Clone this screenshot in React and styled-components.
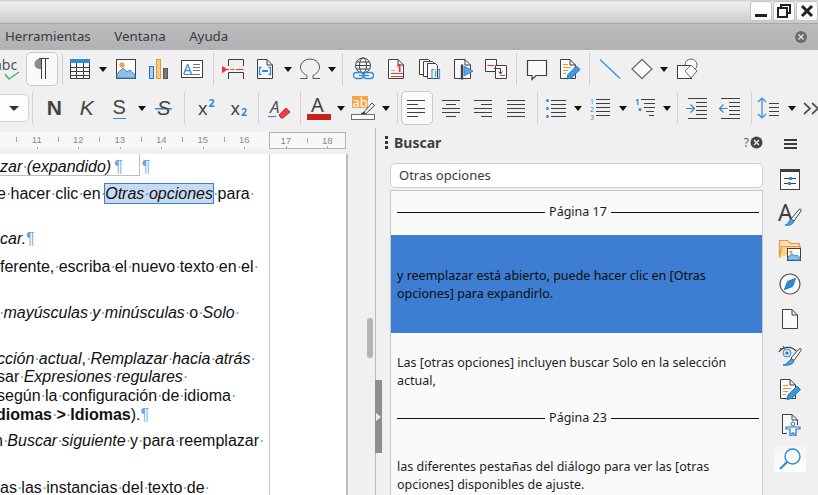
import React from "react";
import styled, { createGlobalStyle } from "styled-components";

const UI_FONT = '"Noto Sans", "Open Sans", sans-serif';
const DOC_FONT = '"Liberation Sans", Arial, sans-serif';
const INK = "#3f3f3f";
const BLUE = "#2f8ad8";

const GlobalStyle = createGlobalStyle`
    html, body {
        margin: 0;
        padding: 0;
        background: #f0f0f0;
    }
    * {
        box-sizing: border-box;
    }
`;

/* ---------- icons ---------- */

const Svg = ({ children, size = 24 }) => (
    <svg width={size} height={size} viewBox="0 0 24 24" fill="none" stroke={INK} strokeWidth="1">
        {children}
    </svg>
);

const Sheet = ({ x = 0 }) => (
    <path d={`M${x + 4.5} 2.5H${x + 14}L${x + 19.5} 8V21.5H${x + 4.5}ZM${x + 14} 2.5V8H${x + 19.5}`} fill="#fafafa" />
);

const Pencil = ({ d }) => <path d={d} fill="#3f97e0" stroke="#1f78c4" />;

const icons = {
    spell: (
        <Svg>
            <text x="-3" y="13" fontSize="14" fontFamily={UI_FONT} fill="#555" stroke="none">abc</text>
            <path d="M8 17l4 5 10-7" stroke="#3cb371" strokeWidth="1.4" />
        </Svg>
    ),
    pilcrow: (
        <Svg>
            <path d="M12 2H9a4.5 5 0 0 0 0 10h3z" fill="#8c8c8c" stroke="none" />
            <path d="M11.5 2v20M15.5 2v20M9 1.5h10" />
        </Svg>
    ),
    table: (
        <Svg>
            <rect x="2.5" y="2.5" width="19" height="19" fill="#fafafa" />
            <rect x="2" y="2" width="20" height="4" fill="#3b87c9" stroke="none" />
            <path d="M2.5 10.5h19M2.5 14.5h19M2.5 18.5h19M8.5 6v15M15.5 6v15" />
        </Svg>
    ),
    image: (
        <Svg>
            <rect x="2.5" y="2.5" width="19" height="19" fill="#fff" />
            <circle cx="8" cy="8" r="2.2" fill="#f7a94c" stroke="#f0933a" />
            <path d="M3 21v-4l6-6 4 4 3-2 5 5v3z" fill="#8cc0ea" stroke="#3b87c9" />
        </Svg>
    ),
    chart: (
        <Svg>
            <rect x="3.5" y="9.5" width="4" height="12" fill="#a8d0f0" stroke="#1f78c4" />
            <rect x="10.5" y="2.5" width="4" height="19" fill="#f9c98a" stroke="#f0933a" />
            <rect x="17.5" y="11.5" width="4" height="10" fill="#777" stroke="#555" />
        </Svg>
    ),
    textbox: (
        <Svg>
            <rect x="1.5" y="3.5" width="21" height="17" fill="#fff" />
            <text x="3" y="17" fontSize="14" fontFamily={UI_FONT} fill={BLUE} stroke="none">A</text>
            <path d="M13 7.5h7M13 10.5h7M13 13.5h7M4 17.5h16" stroke="#777" />
        </Svg>
    ),
    pageBreak: (
        <Svg>
            <path d="M7.5 9V2.5h15V9M7.5 22v-6.5h15V22" />
            <path d="M5 12.5h3M9.5 12.5h4M15 12.5h7.5" stroke="#e33" />
            <path d="M1.5 9.5v6l4-3z" fill="#e33" stroke="#e33" />
        </Svg>
    ),
    field: (
        <Svg>
            <Sheet />
            <path d="M8.5 10.5h-2v7h2M15.5 10.5h2v7h-2" stroke={BLUE} strokeWidth="1.3" />
            <path d="M9 14h6" stroke={BLUE} strokeWidth="2" />
        </Svg>
    ),
    omega: (
        <Svg>
            <path d="M2 21.5h7v-3C5 16.5 2.5 13.5 2.5 10a9.5 8 0 0 1 19 0c0 3.5-2.5 6.5-6.5 8.5v3h7" stroke="#555" />
        </Svg>
    ),
    hyperlink: (
        <Svg>
            <circle cx="11" cy="8.5" r="7.5" fill="#fafafa" />
            <ellipse cx="11" cy="8.5" rx="3.5" ry="7.5" />
            <path d="M3.5 8.5h15M4.5 5h13M4.5 12h13" />
            <rect x="1.5" y="15.5" width="10" height="6" rx="3" fill="#f0f0f0" stroke={BLUE} strokeWidth="1.3" />
            <rect x="11.5" y="15.5" width="10" height="6" rx="3" fill="none" stroke={BLUE} strokeWidth="1.3" />
            <path d="M7 18.5h10" stroke={BLUE} strokeWidth="1.3" />
        </Svg>
    ),
    footnote: (
        <Svg>
            <Sheet x={-1} />
            <text x="11" y="15" fontSize="11" fontWeight="700" fontFamily={UI_FONT} fill="#e33" stroke="none">1</text>
            <path d="M6 16.5h12M6 19.5h12" stroke="#e33" />
            <path d="M6 13.5h4" stroke="#aaa" />
        </Svg>
    ),
    bookmark: (
        <Svg>
            <path d="M1.5 2.5h9l2 2v13h-11z" fill="#fafafa" />
            <path d="M5.5 4.5h9l2 2v13h-11z" fill="#fafafa" />
            <path d="M9.5 6.5h8l2 2v13h-10z" fill="#fafafa" />
            <text x="12.5" y="20" fontSize="11" fontFamily={UI_FONT} fill="#1f78c4" stroke="none">[i]</text>
        </Svg>
    ),
    nextRef: (
        <Svg>
            <path d="M3.5 21.5V2.5H14L19.5 8v13.5z" fill="#fafafa" />
            <path d="M14 2.5V8h5.5" />
            <path d="M11 7.5v15" strokeWidth="2.4" />
            <path d="M13 9l9 5-9 5z" fill="#58a8e8" stroke="#3b87c9" />
        </Svg>
    ),
    crossRef: (
        <Svg>
            <path d="M1.5 2.5h11v12h-11z" fill="#fafafa" />
            <path d="M11.5 8.5h11v13h-11z" fill="#fafafa" />
            <path d="M3.5 8.5h7M16 18.5h5" stroke="#e33" />
            <path d="M10 11.5h6.5v5M14.5 14.5l2 2.500 2-2.500" />
        </Svg>
    ),
    comment: (
        <Svg>
            <path d="M2.5 3.5h19v15H11l-4 4v-4H2.5z" fill="#fafafa" strokeWidth="1.2" />
        </Svg>
    ),
    track: (
        <Svg>
            <Sheet x={-2} />
            <path d="M5 7.5h5M5 10.5h8M5 13.5h5M5 16.5h3" stroke="#f0933a" />
            <Pencil d="M9 22l1-4.5 8.5-8.5 3.5 3.5-8.5 8.5z" />
        </Svg>
    ),
    line: (
        <Svg>
            <path d="M2 2.5l20 19" stroke="#2a8fe0" strokeWidth="1.2" />
        </Svg>
    ),
    diamond: (
        <Svg>
            <path d="M12 2.5L22 12 12 21.5 2 12z" fill="#fafafa" stroke="#6f6f6f" strokeWidth="1.3" />
        </Svg>
    ),
    shapes: (
        <Svg>
            <circle cx="16" cy="8" r="6" fill="#fafafa" stroke="#666" />
            <rect x="2.5" y="8.5" width="14" height="13" fill="#fafafa" />
            <path d="M16 8l6 6-6 7-6-7z" fill="#fafafa" stroke="#6f6f6f" />
        </Svg>
    ),
    clearFormat: (
        <Svg>
            <text x="3" y="17" fontSize="17" fontStyle="italic" fontFamily={UI_FONT} fill="#555" stroke="none">A</text>
            <path d="M1 20.5h8" stroke={BLUE} strokeWidth="1.2" />
            <path d="M12 19l7-7 4 4-7 6h-2z" fill="#ee3d48" stroke="#d8232e" />
        </Svg>
    ),
    fontColor: (
        <Svg>
            <text x="4" y="16" fontSize="20" fontFamily={UI_FONT} fill={INK} stroke="none">A</text>
            <rect x="0" y="18" width="24" height="6" fill="#c9211e" stroke="none" />
        </Svg>
    ),
    highlight: (
        <Svg>
            <rect x="1" y="0" width="16" height="12" fill="#f9a24c" stroke="none" />
            <text x="1.5" y="11" fontSize="13" fontFamily={UI_FONT} fill="#fff" stroke="none">ab</text>
            <path d="M13 16l8-9 2.5 2.5-9 8.5z" fill="#fafafa" />
            <path d="M10 18l3-2 1.5 2z" fill={INK} />
            <rect x="0.5" y="18.5" width="23" height="5" fill="#fafafa" stroke="#6f6f6f" />
        </Svg>
    ),
    alignLeft: (
        <Svg>
            <path d="M2 4.5h18M2 8.5h11M2 12.5h18M2 16.5h18M2 20.5h11" strokeWidth="1.2" />
        </Svg>
    ),
    alignCenter: (
        <Svg>
            <path d="M3 4.5h18M7 8.5h10M3 12.5h18M3 16.5h18M7 20.5h10" strokeWidth="1.2" />
        </Svg>
    ),
    alignRight: (
        <Svg>
            <path d="M3 4.5h18M10 8.5h11M3 12.5h18M3 16.5h18M10 20.5h11" strokeWidth="1.2" />
        </Svg>
    ),
    justify: (
        <Svg>
            <path d="M3 4.5h18M3 8.5h18M3 12.5h18M3 16.5h18M3 20.5h18" strokeWidth="1.2" />
        </Svg>
    ),
    bullets: (
        <Svg>
            <circle cx="3.5" cy="4.5" r="1.5" fill={BLUE} stroke="none" />
            <circle cx="3.5" cy="12.5" r="1.5" fill={BLUE} stroke="none" />
            <circle cx="3.5" cy="20.5" r="1.5" fill={BLUE} stroke="none" />
            <path d="M7 4.5h15M7 8.5h15M7 12.5h15M7 16.5h15M7 20.5h15" strokeWidth="1.1" />
        </Svg>
    ),
    numbers: (
        <Svg>
            <text x="2" y="8" fontSize="7" fontFamily={UI_FONT} fill={BLUE} stroke="none">1</text>
            <text x="2" y="16" fontSize="7" fontFamily={UI_FONT} fill={BLUE} stroke="none">2</text>
            <text x="2" y="24" fontSize="7" fontFamily={UI_FONT} fill={BLUE} stroke="none">3</text>
            <path d="M8 3.5h14M8 7.5h14M8 11.5h14M8 15.5h14M8 19.5h14" strokeWidth="1.1" />
        </Svg>
    ),
    outline: (
        <Svg>
            <text x="2" y="9" fontSize="8" fontWeight="700" fontFamily={UI_FONT} fill={BLUE} stroke="none">1</text>
            <circle cx="7" cy="13.5" r="1.5" fill={BLUE} stroke="none" />
            <path d="M8 3.5h14M11 7.5h11M11 11.5h11M13 15.5h8M16 19.5h5" strokeWidth="1.1" />
        </Svg>
    ),
    indent: (
        <Svg>
            <path d="M3 2.5h19M11 6.5h11M11 10.5h11M11 14.5h11M11 18.5h11M3 22.5h19" strokeWidth="1.1" />
            <path d="M1 12.5h8M5.5 8.5l4 4-4 4" stroke={BLUE} strokeWidth="1.2" />
        </Svg>
    ),
    outdent: (
        <Svg>
            <path d="M3 2.5h19M11 6.5h11M11 10.5h11M11 14.5h11M11 18.5h11M3 22.5h19" strokeWidth="1.1" />
            <path d="M1.5 12.5h8M5.5 8.5l-4 4 4 4" stroke={BLUE} strokeWidth="1.2" />
        </Svg>
    ),
    spacing: (
        <Svg>
            <path d="M5 2v20M1 6l4-4 4 4M1 18l4 4 4-4" stroke={BLUE} strokeWidth="1.2" />
            <path d="M12 7.5h10M12 11.5h10M12 15.5h10M12 19.5h10" strokeWidth="1.2" />
        </Svg>
    ),
    more: (
        <Svg>
            <path d="M4 7l6 5.5L4 18M12 7l6 5.5L12 18" stroke="#555" strokeWidth="1.8" />
        </Svg>
    ),
    properties: (
        <Svg>
            <rect x="2.5" y="2.5" width="19" height="20" fill="#fafafa" />
            <rect x="2" y="2" width="20" height="3" fill={INK} stroke="none" />
            <path d="M6 11.5h12M6 16.5h12" />
            <rect x="11" y="10" width="3" height="3" fill={BLUE} stroke="none" />
            <rect x="10" y="15" width="3" height="3" fill={BLUE} stroke="none" />
        </Svg>
    ),
    styles: (
        <Svg>
            <text x="0" y="19" fontSize="23" fontFamily={UI_FONT} fill={INK} stroke="none">A</text>
            <path d="M13 17L21 7.5c1.5-1 2.500 0 2 1.500l-7 10z" fill="#fafafa" />
            <path d="M7 23c3 0 3-3 6-6l3 2.5c-1 3-5 4.500-9 3.500z" fill="#4a9ee5" stroke="#1f78c4" />
        </Svg>
    ),
    gallery: (
        <Svg>
            <path d="M1.5 20.5V3.5h8l3 3h9v3" fill="#fde3b5" stroke="#f0933a" strokeWidth="1.2" />
            <path d="M1.5 20.5l2-11h19l-1 5" fill="#fbd28d" stroke="#f0933a" strokeWidth="1.2" />
            <rect x="9.5" y="11.5" width="13" height="12" fill="#fff" />
            <circle cx="13" cy="15" r="1.5" fill="#f0933a" stroke="none" />
            <path d="M10 23v-3l4-3 3 2 2-1 3 3v2z" fill="#8cc0ea" stroke="#3b87c9" />
        </Svg>
    ),
    navigator: (
        <Svg>
            <circle cx="12" cy="12" r="10" fill="#fafafa" stroke="#555" strokeWidth="1.2" />
            <path d="M17.5 6.500l-3 8-8 3 3-8z" fill="#2f8ad8" stroke="#1f78c4" />
        </Svg>
    ),
    page: (
        <Svg>
            <Sheet />
        </Svg>
    ),
    pageStyle: (
        <Svg>
            <path d="M1 10c3-5 12-7 17-1" strokeWidth="1.2" />
            <path d="M2 6l2 2M5 4l1.5 2.5" />
            <circle cx="9" cy="11" r="4" fill="#cfe4f7" stroke="#3b87c9" />
            <circle cx="9" cy="11" r="1.6" fill="#1f78c4" stroke="none" />
            <path d="M13 16L21 7c1.5-1 2.500 0 2 1.500l-7 10z" fill="#fafafa" />
            <path d="M5 23c3 0 5-3 8-6l3 2.5c-1 3-7 4.500-11 3.500z" fill="#4a9ee5" stroke="#1f78c4" />
        </Svg>
    ),
    manage: (
        <Svg>
            <Sheet x={-2} />
            <path d="M5 8.5h5M5 11.5h8M5 14.5h5M5 17.5h3" stroke="#f0933a" />
            <Pencil d="M9 22.5l1-4.5 9-9 3.5 3.5-9 9z" />
        </Svg>
    ),
    accessibility: (
        <Svg>
            <path d="M4.5 21.5V2.5H14L19.5 8v5" fill="#fafafa" />
            <path d="M14 2.5V8h5.5M4.5 21.5H9" />
            <circle cx="15" cy="12" r="2" stroke="#1f78c4" fill="#fafafa" />
            <path d="M8 15h14v2h-4v7h-2v-3h-2v3h-2v-7H8z" fill="#fafafa" stroke="#1f78c4" strokeWidth="1.2" />
        </Svg>
    ),
    search: (
        <Svg>
            <circle cx="14.5" cy="9.5" r="7.5" fill="#fafafa" stroke={BLUE} strokeWidth="1.4" />
            <path d="M9 15L2 22" stroke={BLUE} strokeWidth="2.2" />
        </Svg>
    ),
};

/* ---------- chrome ---------- */

const Window = styled.div`
    width: 818px;
    height: 495px;
    overflow: hidden;
    display: flex;
    flex-direction: column;
    background: #f0f0f0;
    font-family: ${UI_FONT};
    color: ${INK};
`;

const TitleBar = styled.div`
    height: 24px;
    flex: none;
    display: flex;
    justify-content: flex-end;
    align-items: flex-start;
    gap: 1px;
    padding-top: 1px;
    background: linear-gradient(#c8c8c8 0, #ececec 2px, #e6e6e6 8px, #c9c9cb 23px);
    border-bottom: 1px solid #a8a8a8;
`;

const WindowButton = styled.button`
    width: 22px;
    height: 20px;
    padding: 0;
    display: flex;
    align-items: center;
    justify-content: center;
    background: #fbfbfb;
    border: 1px solid #c4c4c4;
    border-radius: 3px;
`;

const MenuBar = styled.div`
    height: 26px;
    flex: none;
    display: flex;
    align-items: center;
    padding: 0 5px 2px;
    background: linear-gradient(#bcbcbf, #b1b1b4);
    font-size: 13.3px;
    color: #3a3a3a;
`;

const Menu = styled.span`
    margin-right: ${(p) => p.$gap}px;
`;

const CloseDoc = styled.span`
    margin: 2px 5px 0 auto;
    display: flex;
`;

const Toolbar = styled.div`
    height: ${(p) => p.$height}px;
    flex: none;
    display: flex;
    align-items: center;
    white-space: nowrap;
    margin-left: ${(p) => p.$inset || 0}px;
`;

const ToolButton = styled.div`
    width: ${(p) => p.$w || 32.5}px;
    height: 34px;
    flex: none;
    display: flex;
    align-items: center;
    justify-content: center;
    margin-right: ${(p) => p.$after || 0}px;
    border-radius: 5px;
    border: 1px solid ${(p) => (p.$active ? "#c9c9c9" : "transparent")};
    background: ${(p) => (p.$active ? "#fafafa" : "transparent")};
`;

const TextTool = styled(ToolButton)`
    font-size: 21px;
    color: #444;
    font-weight: ${(p) => (p.$bold ? 700 : 400)};
    font-style: ${(p) => (p.$italic ? "italic" : "normal")};
    font-family: ${DOC_FONT};
`;

const Under = styled.span`
    display: block;
    line-height: 21px;
    border-bottom: 1.5px solid ${BLUE};
    font-size: 20px;
`;

const Struck = styled.span`
    background: linear-gradient(${BLUE}, ${BLUE}) center 11px / 100% 1.5px no-repeat;
    padding: 0 2px;
    font-style: italic;
    font-size: 20px;
`;

const ScriptTool = styled(ToolButton)`
    font-family: ${UI_FONT};
    font-size: 18px;
    color: #444;
`;

const Script = styled.span`
    font-size: 10.5px;
    font-weight: 700;
    line-height: 1;
    color: ${BLUE};
    margin-left: 1px;
    position: relative;
    top: ${(p) => (p.$up ? "-5px" : "4px")};
`;

const Arrow = styled.div`
    width: ${(p) => p.$w || 12}px;
    flex: none;
    display: flex;
    justify-content: center;
    &::before {
        content: "";
        border-left: 4.5px solid transparent;
        border-right: 4.5px solid transparent;
        border-top: 5px solid #111;
    }
`;

const Separator = styled.div`
    width: 1px;
    height: 32px;
    flex: none;
    margin: 0 ${(p) => p.$r || 0}px 0 ${(p) => p.$l || 0}px;
    background: #d0d0d0;
`;

const StyleBox = styled.div`
    width: 29px;
    height: 28px;
    flex: none;
    display: flex;
    align-items: center;
    justify-content: center;
    background: #fdfdfd;
    border: 1px solid #d4d4d4;
    border-left: 0;
    border-radius: 0 5px 5px 0;
    &::before {
        content: "";
        border-left: 5px solid transparent;
        border-right: 5px solid transparent;
        border-top: 5px solid #333;
    }
`;

/* ---------- document ---------- */

const Body = styled.div`
    flex: 1;
    min-height: 0;
    display: flex;
`;

const Editor = styled.div`
    width: 375px;
    flex: none;
    display: flex;
    flex-direction: column;
`;

const Ruler = styled.div`
    width: 346px;
    height: 17px;
    flex: none;
    margin-top: 4px;
    display: flex;
    background: #f7f7f7;
    font-family: ${DOC_FONT};
    font-size: 9.5px;
    color: #8a8a8a;
`;

const RulerScale = styled.div`
    width: ${(p) => p.$w}px;
    flex: none;
    display: flex;
    overflow: hidden;
    padding-left: ${(p) => p.$pad || 0}px;
    border: ${(p) => (p.$margin ? "1px solid #b5b5b5" : "0")};
`;

const RulerCell = styled.div`
    width: 41.5px;
    flex: none;
    position: relative;
    text-align: center;
    line-height: 16px;
    margin-left: ${(p) => p.$shift || 0}px;
    &::before {
        content: "";
        position: absolute;
        left: 0;
        top: 5px;
        height: 5px;
        width: 1px;
        background: #a5a5a5;
    }
    &::after {
        content: "";
        position: absolute;
        left: 50%;
        bottom: 0;
        height: 2px;
        width: 1px;
        background: #a5a5a5;
    }
`;

const Canvas = styled.div`
    flex: 1;
    min-height: 0;
    display: flex;
    margin-top: 5px;
    overflow: hidden;
`;

const Page = styled.div`
    width: 348px;
    flex: none;
    display: flex;
    background: #fff;
    border-right: 2px solid #bdbdbd;
`;

const TextArea = styled.div`
    width: 270px;
    flex: none;
    position: relative;
    overflow: hidden;
    border-right: 1px solid #c4c4c4;
    padding-top: 4px;
    font-family: ${DOC_FONT};
    font-size: 16px;
    line-height: 18.7px;
    color: #111;
`;

const Line = styled.div`
    --space: ${(p) => p.$space || 4.45}px;
    white-space: nowrap;
    margin-top: ${(p) => p.$top || 0}px;
    margin-left: ${(p) => p.$x || 0}px;
`;

const Dot = styled.span`
    display: inline-block;
    width: var(--space);
    text-align: center;
    color: #3f9be8;
    font-style: normal;
    font-weight: 400;
`;

const Hit = styled.span`
    background: #c6daf1;
    outline: 1px solid #3d7ed2;
    padding: 1px 0;
`;

const Em = styled.em`
    font-style: italic;
`;

const Strong = styled.strong`
    font-weight: 700;
`;

const Mark = styled.span`
    color: #6ba6de;
    font-style: normal;
    margin-left: ${(p) => p.$gap || 0}px;
`;

const FrameEdge = styled.div`
    position: absolute;
    left: 0;
    top: 0;
    width: 140px;
    height: 22px;
    border-right: 1px solid #bdbdbd;
    border-bottom: 1px solid #bdbdbd;
`;

const Scrollbar = styled.div`
    flex: 1;
    position: relative;
`;

const ScrollThumb = styled.div`
    position: absolute;
    left: 19px;
    top: 164px;
    width: 6px;
    height: 40px;
    border-radius: 3px;
    background: #b4b4b4;
`;

const Words = ({ children }) =>
    children.split(" ").map((word, i) => (
        <React.Fragment key={i}>
            {i > 0 && <Dot>·</Dot>}
            {word}
        </React.Fragment>
    ));

/* ---------- sidebar ---------- */

const Sidebar = styled.div`
    flex: 1;
    min-width: 0;
    display: flex;
    position: relative;
    border-left: 1px solid #bcbcbc;
`;

const SideHandle = styled.div`
    position: absolute;
    left: -1px;
    top: 252px;
    width: 7px;
    height: 73px;
    display: flex;
    align-items: center;
    justify-content: center;
    background: #8e8e8e;
    &::before {
        content: "";
        border-top: 4px solid transparent;
        border-bottom: 4px solid transparent;
        border-left: 5px solid #eee;
    }
`;

const Deck = styled.div`
    width: 388px;
    flex: none;
    padding: 6px 0 0 14px;
    display: flex;
    flex-direction: column;
`;

const DeckTitle = styled.div`
    width: 373px;
    height: 18px;
    flex: none;
    display: flex;
    align-items: center;
    padding-bottom: 2px;
    font-size: 14px;
    font-weight: 700;
    color: #3f3f3f;
`;

const Grip = styled.span`
    width: 3px;
    margin: 0 6px 0 -5px;
    display: flex;
    flex-direction: column;
    &::before,
    &::after {
        content: "";
        height: 3px;
        background: #333;
        box-shadow: 0 5px 0 #333;
    }
    &::after {
        margin-top: 7px;
        box-shadow: none;
    }
`;

const Help = styled.span`
    margin-left: auto;
    margin-right: 1px;
    font-size: 12px;
    font-weight: 400;
    color: #666;
`;

const FindInput = styled.div`
    width: 373px;
    height: 25px;
    flex: none;
    margin-top: 11px;
    padding: 0 0 2px 8px;
    display: flex;
    align-items: center;
    background: #fff;
    border: 1px solid #cfcfcf;
    border-radius: 5px;
    font-size: 13px;
    color: #3a3a3a;
`;

const Results = styled.div`
    width: 373px;
    flex: 1;
    min-height: 0;
    margin-top: 2px;
    display: flex;
    flex-direction: column;
    overflow: hidden;
    background: #fafafa;
    border: 1px solid #c8c8c8;
    border-bottom: 0;
    font-size: 12.5px;
    line-height: 18px;
    color: #1e1e1e;
`;

const PageRow = styled.div`
    display: flex;
    align-items: center;
    gap: 4px;
    padding: 0 3px 0 6px;
    margin-top: ${(p) => p.$top}px;
    height: 18px;
    flex: none;
    &::before,
    &::after {
        content: "";
        flex: 1;
        height: 1px;
        background: #111;
    }
`;

const ResultItem = styled.div`
    flex: none;
    padding: ${(p) => (p.$selected ? "32px" : 0)} 6px 0;
    margin-top: ${(p) => p.$top || 0}px;
    background: ${(p) => (p.$selected ? "#3d7ed2" : "transparent")};
    height: ${(p) => (p.$selected ? "98px" : "auto")};
    color: ${(p) => (p.$selected ? "#0c0c0c" : "inherit")};
`;

const TabBar = styled.div`
    flex: 1;
    display: flex;
    flex-direction: column;
    align-items: center;
    padding: 8px 2px 0 0;
`;

const Burger = styled.div`
    width: 13px;
    height: 10px;
    flex: none;
    margin: 3px 0 12px;
    border-top: 2px solid #3a3a3a;
    border-bottom: 2px solid #3a3a3a;
    position: relative;
    &::before {
        content: "";
        position: absolute;
        left: 0;
        right: 0;
        top: 2px;
        height: 2px;
        background: #3a3a3a;
    }
`;

const Tab = styled.div`
    width: 32px;
    height: ${(p) => (p.$active ? 27 : 35)}px;
    flex: none;
    display: flex;
    align-items: center;
    justify-content: center;
    margin-top: ${(p) => (p.$active ? 4 : 0)}px;
    border-radius: 3px;
    background: ${(p) => (p.$active ? "linear-gradient(#f4f4f4, #ffffff)" : "transparent")};
`;

const SIDE_TABS = ["properties", "styles", "gallery", "navigator", "page", "pageStyle", "manage", "accessibility"];

const App = () => (
    <>
        <GlobalStyle />
        <Window>
            <TitleBar>
                <WindowButton aria-label="Minimizar">
                    <svg width="16" height="16" viewBox="0 0 16 16"><rect x="2" y="11" width="12" height="3" fill="#222" /></svg>
                </WindowButton>
                <WindowButton aria-label="Restaurar">
                    <svg width="16" height="16" viewBox="0 0 16 16" fill="none" stroke="#222">
                        <rect x="5" y="2" width="9" height="8" strokeWidth="2" />
                        <rect x="2" y="5" width="9" height="9" fill="#fbfbfb" strokeWidth="2" />
                    </svg>
                </WindowButton>
                <WindowButton aria-label="Cerrar">
                    <svg width="16" height="16" viewBox="0 0 16 16"><path d="M3 3l10 10M13 3L3 13" stroke="#222" strokeWidth="3" /></svg>
                </WindowButton>
            </TitleBar>
            <MenuBar>
                <Menu $gap={23.5}>Herramientas</Menu>
                <Menu $gap={23.5}>Ventana</Menu>
                <Menu>Ayuda</Menu>
                <CloseDoc>
                    <svg width="14" height="14" viewBox="0 0 14 14">
                        <circle cx="7" cy="7" r="6" fill="#6c6c6c" />
                        <path d="M4.5 4.5l5 5M9.5 4.5l-5 5" stroke="#e0e0e0" strokeWidth="1.4" />
                    </svg>
                </CloseDoc>
            </MenuBar>
            <Toolbar $height={38} $inset={-7}>
                <ToolButton>{icons.spell}</ToolButton>
                <ToolButton $active>{icons.pilcrow}</ToolButton>
                <Separator $l={4} $r={1} />
                <ToolButton>{icons.table}</ToolButton>
                <Arrow $w={13} />
                <ToolButton>{icons.image}</ToolButton>
                <ToolButton>{icons.chart}</ToolButton>
                <ToolButton $w={34}>{icons.textbox}</ToolButton>
                <Separator $l={4} $r={3} />
                <ToolButton>{icons.pageBreak}</ToolButton>
                <ToolButton>{icons.field}</ToolButton>
                <Arrow />
                <ToolButton>{icons.omega}</ToolButton>
                <Arrow $w={11} />
                <Separator $l={5} $r={4} />
                <ToolButton $w={33}>{icons.hyperlink}</ToolButton>
                <ToolButton $w={33}>{icons.footnote}</ToolButton>
                <ToolButton $w={33}>{icons.bookmark}</ToolButton>
                <ToolButton $w={33}>{icons.nextRef}</ToolButton>
                <ToolButton $w={33}>{icons.crossRef}</ToolButton>
                <Separator $l={4} $r={3} />
                <ToolButton $w={33}>{icons.comment}</ToolButton>
                <ToolButton $w={33}>{icons.track}</ToolButton>
                <Separator $l={3} $r={4} />
                <ToolButton $w={32}>{icons.line}</ToolButton>
                <ToolButton $w={32}>{icons.diamond}</ToolButton>
                <Arrow />
                <ToolButton $w={33}>{icons.shapes}</ToolButton>
            </Toolbar>
            <Toolbar $height={40}>
                <StyleBox />
                <Separator $l={3} $r={5} />
                <TextTool $bold>N</TextTool>
                <TextTool $italic>K</TextTool>
                <TextTool><Under>S</Under></TextTool>
                <Arrow />
                <TextTool><Struck>S</Struck></TextTool>
                <Separator $l={4} $r={5} />
                <ScriptTool>x<Script $up>2</Script></ScriptTool>
                <ScriptTool>x<Script>2</Script></ScriptTool>
                <Separator $l={3} $r={4} />
                <ToolButton>{icons.clearFormat}</ToolButton>
                <Separator $l={4} $r={2} />
                <ToolButton>{icons.fontColor}</ToolButton>
                <Arrow />
                <ToolButton>{icons.highlight}</ToolButton>
                <Arrow $w={13} />
                <Separator $l={4} $r={3} />
                <ToolButton $active $after={1.5}>{icons.alignLeft}</ToolButton>
                <ToolButton>{icons.alignCenter}</ToolButton>
                <ToolButton>{icons.alignRight}</ToolButton>
                <ToolButton>{icons.justify}</ToolButton>
                <Separator $l={4.5} $r={2} />
                <ToolButton>{icons.bullets}</ToolButton>
                <Arrow />
                <ToolButton>{icons.numbers}</ToolButton>
                <Arrow />
                <ToolButton>{icons.outline}</ToolButton>
                <Arrow $w={11} />
                <Separator $l={5} $r={3} />
                <ToolButton>{icons.indent}</ToolButton>
                <ToolButton>{icons.outdent}</ToolButton>
                <Separator $l={5} $r={1} />
                <ToolButton>{icons.spacing}</ToolButton>
                <Arrow />
                <ToolButton $w={28}>{icons.more}</ToolButton>
            </Toolbar>
            <Body>
                <Editor>
                    <Ruler>
                        <RulerScale $w={269} $pad={16}>
                            {[11, 12, 13, 14, 15, 16].map((n) => (
                                <RulerCell key={n}>{n}</RulerCell>
                            ))}
                        </RulerScale>
                        <RulerScale $w={77} $margin>
                            <RulerCell $shift={-5}>17</RulerCell>
                            <RulerCell>18</RulerCell>
                        </RulerScale>
                    </Ruler>
                    <Canvas>
                        <Page>
                            <TextArea>
                                <FrameEdge />
                                <Line><Em><Words>zar (expandido)</Words></Em><Mark $gap={3}>¶</Mark><Mark $gap={19}>¶</Mark></Line>
                                <Line $top={8} $space={4.6} $x={-3}>
                                    <Words>e hacer clic en</Words><Dot>·</Dot>
                                    <Hit><Em><Words>Otras opciones</Words></Em></Hit>
                                    <Dot>·</Dot>para<Dot>·</Dot>
                                </Line>
                                <Line $top={27}><Em>car.</Em><Mark>¶</Mark></Line>
                                <Line $top={9}><Words>ferente, escriba el nuevo texto en el</Words><Dot>·</Dot></Line>
                                <Line $top={27} $x={-1}><Dot>·</Dot><Em><Words>mayúsculas y minúsculas</Words></Em><Dot>·</Dot>o<Dot>·</Dot><Em>Solo</Em><Dot>·</Dot></Line>
                                <Line $top={27} $x={-3}><Em>cción<Dot>·</Dot>actual</Em>,<Dot>·</Dot><Em><Words>Remplazar hacia atrás</Words></Em><Dot>·</Dot></Line>
                                <Line $x={-3}>sar<Dot>·</Dot><Em><Words>Expresiones regulares</Words></Em><Dot>·</Dot></Line>
                                <Line $x={-3}><Words>según la configuración de idioma</Words><Dot>·</Dot></Line>
                                <Line $x={-4}><Strong><Words>diomas > Idiomas</Words></Strong>).<Mark>¶</Mark></Line>
                                <Line $top={8} $x={-6}>n<Dot>·</Dot><Em><Words>Buscar siguiente</Words></Em><Dot>·</Dot><Words>y para reemplazar</Words><Dot>·</Dot></Line>
                                <Line $top={28}><Words>as las instancias del texto de</Words><Dot>·</Dot></Line>
                            </TextArea>
                        </Page>
                        <Scrollbar>
                            <ScrollThumb />
                        </Scrollbar>
                    </Canvas>
                </Editor>
                <Sidebar>
                    <SideHandle />
                    <Deck>
                        <DeckTitle>
                            <Grip />
                            Buscar
                            <Help>?</Help>
                            <svg width="13" height="13" viewBox="0 0 13 13">
                                <circle cx="6.5" cy="6.5" r="6" fill="#444" />
                                <path d="M4 4l5 5M9 4l-5 5" stroke="#eee" strokeWidth="1.4" />
                            </svg>
                        </DeckTitle>
                        <FindInput>Otras opciones</FindInput>
                        <Results>
                            <PageRow $top={12}>Página 17</PageRow>
                            <ResultItem $selected $top={14}>
                                y reemplazar está abierto, puede hacer clic en [Otras opciones] para expandirlo.
                            </ResultItem>
                            <ResultItem $top={21}>
                                Las [otras opciones] incluyen buscar Solo en la selección actual,
                            </ResultItem>
                            <PageRow $top={19}>Página 23</PageRow>
                            <ResultItem $top={31}>
                                las diferentes pestañas del diálogo para ver las [otras opciones] disponibles de ajuste.
                            </ResultItem>
                        </Results>
                    </Deck>
                    <TabBar>
                        <Burger />
                        {SIDE_TABS.map((name) => (
                            <Tab key={name}>{icons[name]}</Tab>
                        ))}
                        <Tab $active>{icons.search}</Tab>
                    </TabBar>
                </Sidebar>
            </Body>
        </Window>
    </>
);

export default App;
